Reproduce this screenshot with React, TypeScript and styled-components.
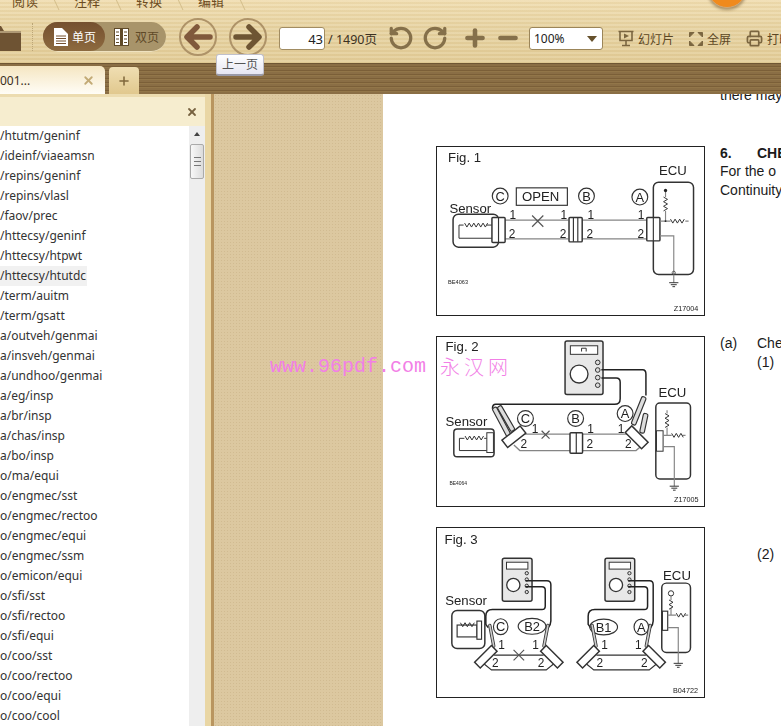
import React from 'react';
import styled, { createGlobalStyle } from 'styled-components';
import { Plus, Printer, RotateCcw, RotateCw, Minus, X } from 'lucide-react';

const GlobalStyle = createGlobalStyle`
  html, body { margin: 0; padding: 0; height: 100%; overflow: hidden; background: #fff; }
  #root { height: 100%; }
  * { box-sizing: border-box; }
`;

const cjk = `"Noto Sans", "Noto Sans CJK SC", sans-serif`;

const Shell = styled.div`
  position: relative;
  width: 781px;
  height: 726px;
  overflow: hidden;
  display: flex;
  flex-direction: column;
  font-family: ${cjk};
`;

const Toolbar = styled.header`
  height: 64px;
  flex: none;
  overflow: hidden;
  background:
    repeating-linear-gradient(to bottom, rgba(255, 255, 255, 0.1) 0 2px, rgba(150, 110, 50, 0.05) 2px 4px),
    linear-gradient(to bottom, #f0ddb0, #e6d2a0 50%, #e3cd98);
  border-bottom: 1px solid #6f5634;
`;

const MenuRow = styled.nav`
  height: 10px;
  display: flex;
  padding-left: 12px;
`;

const MenuItem = styled.span`
  position: relative;
  width: 62px;
  flex: none;
  font-size: 13px;
  line-height: 13px;
  margin-top: -5px;
  color: #6d4d22;
  &::after {
    content: '';
    position: absolute;
    left: 43px;
    top: 0;
    width: 1px;
    height: 15px;
    background: #d3bd8a;
    transform: skewX(25deg);
  }
`;

const ToolRow = styled.div`
  height: 53px;
  display: flex;
  align-items: center;
  padding-top: 1px;
`;

const Folder = styled.svg`
  width: 32px;
  height: 28px;
  margin-left: -11px;
  flex: none;
`;

const DotDivider = styled.i`
  width: 0;
  height: 28px;
  margin: 0 10px 0 11px;
  border-left: 1px dotted #bca677;
`;

const ViewToggle = styled.div`
  width: 123px;
  height: 30px;
  display: flex;
  border-radius: 15px;
  background: #a8946a;
  border-bottom: 1px solid #efe2bf;
`;

const ViewOption = styled.div<{ $active?: boolean }>`
  width: ${p => (p.$active ? 62 : 61)}px;
  height: 29px;
  display: flex;
  align-items: center;
  gap: ${p => (p.$active ? 4 : 6)}px;
  padding-left: ${p => (p.$active ? 11 : 9)}px;
  border-radius: 15px;
  font-size: 12px;
  color: ${p => (p.$active ? '#fff' : '#5f4a28')};
  background: ${p => (p.$active ? 'linear-gradient(#75502f, #8d6a3f)' : 'transparent')};
`;

const NavButton = styled.div<{ $first?: boolean }>`
  width: 38px;
  height: 38px;
  margin-left: ${p => (p.$first ? 13 : 12)}px;
  flex: none;
  display: flex;
  align-items: center;
  justify-content: center;
  border: 2px solid #ae9368;
  border-radius: 50%;
`;

const PageInput = styled.div`
  width: 46px;
  height: 23px;
  margin: 3px 0 0 12px;
  flex: none;
  padding-right: 1px;
  background: #fff;
  border: 1px solid #a18c62;
  border-radius: 3px;
  font-size: 13px;
  line-height: 22px;
  text-align: right;
  color: #222;
`;

const PageCount = styled.span`
  width: 60px;
  flex: none;
  margin: 3px 0 0 3px;
  font-size: 12.5px;
  color: #3c3122;
`;

const IconSlot = styled.div<{ $gap?: number }>`
  margin: 2px 0 0 ${p => p.$gap ?? 0}px;
  flex: none;
  display: flex;
  color: #85704a;
`;

const ZoomSelect = styled.div`
  width: 74px;
  height: 23px;
  margin: 3px 0 0 8px;
  flex: none;
  display: flex;
  align-items: center;
  justify-content: space-between;
  padding: 0 4px;
  background: #fff;
  border: 1px solid #9b8559;
  border-radius: 3px;
  font-size: 12px;
  color: #222;
  &::after {
    content: '';
    margin-right: 1px;
    border-left: 5px solid transparent;
    border-right: 5px solid transparent;
    border-top: 6px solid #66512c;
  }
`;

const ToolLink = styled.div<{ $gap: number }>`
  margin: 3px 0 0 ${p => p.$gap}px;
  flex: none;
  display: flex;
  align-items: center;
  gap: 4px;
  font-size: 12px;
  white-space: nowrap;
  color: #5c4724;
`;

const TabBar = styled.div`
  height: 30px;
  flex: none;
  display: flex;
  align-items: flex-end;
  gap: 4px;
  background: repeating-linear-gradient(to bottom, #8a6e45 0 2px, #7b5f38 2px 3px, #927649 3px 4px);
`;

const DocTab = styled.div`
  width: 105px;
  height: 28px;
  display: flex;
  align-items: center;
  justify-content: space-between;
  padding-right: 10px;
  font-size: 12px;
  color: #3b2f1d;
  background: linear-gradient(to bottom, #f5e6c2, #fffdf6);
  border-radius: 0 5px 0 0;
`;

const AddTab = styled.div`
  width: 30px;
  height: 27px;
  display: flex;
  align-items: center;
  justify-content: center;
  color: #80683c;
  background: linear-gradient(to bottom, #efdeb2, #e1c88e);
  border-radius: 4px 4px 0 0;
`;

const Main = styled.main`
  flex: 1;
  min-height: 0;
  display: flex;
`;

const Sidebar = styled.aside`
  width: 205px;
  flex: none;
  padding-top: 3px;
  display: flex;
  flex-direction: column;
  background: #ecdcb0;
`;

const SideHeader = styled.div`
  height: 29px;
  flex: none;
  display: flex;
  align-items: center;
  justify-content: flex-end;
  padding-right: 7px;
  color: #776240;
  background: #f6edcf;
`;

const SideBody = styled.div`
  flex: 1;
  min-height: 0;
  display: flex;
  overflow: hidden;
  background: #fff;
`;

const Outline = styled.ul`
  flex: 1;
  margin: 0;
  padding: 0;
  list-style: none;
`;

const OutlineRow = styled.li<{ $current?: boolean }>`
  width: ${p => (p.$current ? '87px' : 'auto')};
  height: 20px;
  font-size: 12px;
  line-height: 20px;
  color: #333;
  white-space: nowrap;
  background: ${p => (p.$current ? '#f1f1f1' : 'transparent')};
`;

const ScrollTrack = styled.div`
  width: 16px;
  flex: none;
  display: flex;
  flex-direction: column;
  align-items: center;
  background: #eeeeee;
  padding-top: 6px;
`;

const ScrollUp = styled.i`
  border-left: 3px solid transparent;
  border-right: 3px solid transparent;
  border-bottom: 4px solid #444;
`;

const ScrollThumb = styled.div`
  width: 14px;
  height: 35px;
  margin-top: 8px;
  display: flex;
  align-items: center;
  justify-content: center;
  border: 1px solid #aaa;
  border-radius: 2px;
  background: linear-gradient(to right, #f8f8f8, #dcdcdc);
  &::after {
    content: '';
    width: 7px;
    height: 7px;
    border-top: 1px solid #777;
    border-bottom: 1px solid #777;
    background: linear-gradient(#777, #777) center / 100% 1px no-repeat;
  }
`;

const Splitter = styled.div`
  width: 9px;
  flex: none;
  background: #e9d6a4;
  border-right: 3px solid #b9955f;
`;

const Desk = styled.div`
  width: 169px;
  flex: none;
  background-color: #dcc8a0;
  background-image: radial-gradient(rgba(140, 110, 60, 0.14) 1px, transparent 1px);
  background-size: 3px 3px;
`;

const Page = styled.section`
  flex: 1;
  min-width: 0;
  overflow: hidden;
  display: flex;
  padding-left: 53px;
  background: #fff;
`;

const FigureColumn = styled.div`
  width: 269px;
  flex: none;
  padding-top: 52px;
  display: flex;
  flex-direction: column;
  gap: 20px;
`;

const Figure = styled.figure<{ $h: number }>`
  width: 269px;
  height: ${p => p.$h}px;
  margin: 0;
  flex: none;
  border: 1px solid #222;
  svg { display: block; width: 100%; height: 100%; filter: blur(0.25px); }
`;

const TextColumn = styled.div`
  margin-left: 15px;
  margin-top: -8px;
  flex: 1;
  min-width: 0;
  font-family: "Liberation Sans", Arial, sans-serif;
  font-size: 14px;
  line-height: 19px;
  color: #1b1b1b;
  white-space: nowrap;
`;

const Para = styled.p<{ $top?: number; $indent?: number; $bold?: boolean }>`
  margin: ${p => p.$top ?? 0}px 0 0 ${p => p.$indent ?? 0}px;
  font-weight: ${p => (p.$bold ? 700 : 400)};
  display: flex;
`;

const Marker = styled.span<{ $w: number }>`
  width: ${p => p.$w}px;
  flex: none;
`;

const Tooltip = styled.div`
  position: absolute;
  left: 216px;
  top: 54px;
  width: 48px;
  height: 22px;
  text-align: center;
  font-size: 12px;
  line-height: 20px;
  color: #555;
  background: linear-gradient(#ffffff, #e6e6f2);
  border: 1px solid #c0c0cc;
  border-bottom: 2px solid #9a9aa8;
  border-radius: 3px;
`;

const Badge = styled.div`
  position: absolute;
  left: 707px;
  top: -32px;
  width: 40px;
  height: 40px;
  border-radius: 50%;
  background: #f08a1d;
  border: 1px solid #cfa878;
  box-shadow: 0 2px 3px rgba(90, 60, 20, 0.45);
`;

const Watermark = styled.div`
  position: absolute;
  left: 270px;
  top: 352px;
  display: flex;
  gap: 14px;
  align-items: center;
  color: #f27fe6;
  white-space: nowrap;
`;

const WatermarkUrl = styled.span`
  font-family: "Liberation Mono", monospace;
  font-size: 20px;
`;

const WatermarkName = styled.span`
  font-family: "Noto Sans CJK SC", sans-serif;
  font-size: 20px;
  letter-spacing: 4px;
  font-weight: 300;
`;

const outline = [
  '/htutm/geninf', '/ideinf/viaeamsn', '/repins/geninf', '/repins/vlasl', '/faov/prec',
  '/httecsy/geninf', '/httecsy/htpwt', '/httecsy/htutdc', '/term/auitm', '/term/gsatt',
  'a/outveh/genmai', 'a/insveh/genmai', 'a/undhoo/genmai', 'a/eg/insp', 'a/br/insp',
  'a/chas/insp', 'a/bo/insp', 'o/ma/equi', 'o/engmec/sst', 'o/engmec/rectoo',
  'o/engmec/equi', 'o/engmec/ssm', 'o/emicon/equi', 'o/sfi/sst', 'o/sfi/rectoo',
  'o/sfi/equi', 'o/coo/sst', 'o/coo/rectoo', 'o/coo/equi', 'o/coo/cool',
];

const ink = '#333';
const wire = '#858585';

// figure drawings use a 807x510 box, three times the on-screen size
const Label = ({ x, y, s = 40, children }: { x: number; y: number; s?: number; children: React.ReactNode }) => (
  <text x={x} y={y} fontSize={s} fontFamily="Liberation Sans, Arial, sans-serif" fill="#222">{children}</text>
);

const Ring = ({ x, y, t, rx = 24, ry = 24 }: { x: number; y: number; t: string; rx?: number; ry?: number }) => (
  <g>
    <ellipse cx={x} cy={y} rx={rx} ry={ry} fill="none" stroke={ink} strokeWidth={3.5} />
    <text x={x} y={y + 14} fontSize={39} textAnchor="middle" fontFamily="Liberation Sans, Arial, sans-serif" fill="#222">{t}</text>
  </g>
);

const Zig = ({ x, y, n = 7, vertical }: { x: number; y: number; n?: number; vertical?: boolean }) => {
  const pts = Array.from({ length: n }, (_, i) => {
    const a = i * 7;
    const b = i % 2 ? 6 : -6;
    return vertical ? `${x + b},${y + a}` : `${x + a},${y + b}`;
  }).join(' ');
  return <polyline points={pts} fill="none" stroke={ink} strokeWidth={3} />;
};

const Connector = ({ x, y, w, h, bars = 1 }: { x: number; y: number; w: number; h: number; bars?: number }) => (
  <g>
    <rect x={x} y={y} width={w} height={h} fill="#fff" stroke={ink} strokeWidth={4.5} rx={3} />
    {Array.from({ length: bars }, (_, i) => {
      const bx = x + (w * (i + 1)) / (bars + 1);
      return <line key={i} x1={bx} y1={y} x2={bx} y2={y + h} stroke={ink} strokeWidth={3.5} />;
    })}
  </g>
);

const Cross = ({ x, y, r = 17 }: { x: number; y: number; r?: number }) => (
  <path d={`M${x - r} ${y - r}L${x + r} ${y + r}M${x - r} ${y + r}L${x + r} ${y - r}`} stroke="#555" strokeWidth={3.5} />
);

const Ground = ({ x, y }: { x: number; y: number }) => (
  <path d={`M${x - 14} ${y}H${x + 14}M${x - 9} ${y + 6}H${x + 9}M${x - 4} ${y + 12}H${x + 4}`} stroke={ink} strokeWidth={3} />
);

const Pins = ({ items }: { items: [number, number, string][] }) => (
  <>{items.map(([x, y, t]) => <Label key={`${x}-${y}`} x={x} y={y} s={36}>{t}</Label>)}</>
);

const Probe = ({ x, y, angle, len = 75 }: { x: number; y: number; angle: number; len?: number }) => (
  <g transform={`rotate(${angle} ${x} ${y})`}>
    <rect x={x - 7} y={y} width={14} height={len} rx={5} fill="#ddd" stroke={ink} strokeWidth={3.5} />
  </g>
);

const Meter = ({ x, y, w, h, r, sy, sg, sr }: { x: number; y: number; w: number; h: number; r: number; sy: number; sg: number; sr: number }) => (
  <g>
    <rect x={x} y={y} width={w} height={h} rx={6} fill="#e8e8e8" stroke={ink} strokeWidth={4.5} />
    <rect x={x + w * 0.14} y={y + h * 0.09} width={w * 0.72} height={h * 0.16} fill="#fff" stroke={ink} strokeWidth={3} />
    <circle cx={x + w * 0.37} cy={y + h * 0.62} r={r} fill="#fff" stroke={ink} strokeWidth={4} />
    {[0, 1, 2, 3].map(i => (
      <circle key={i} cx={x + w - 16} cy={sy + i * sg} r={sr} fill="#ddd" stroke={ink} strokeWidth={3} />
    ))}
  </g>
);

const FigureOne = () => (
  <svg viewBox="18 18 807 510">
    <Label x={50} y={63}>Fig. 1</Label>
    <Label x={690} y={102}>ECU</Label>
    <Ring x={208} y={167} t="C" />
    <rect x={257} y={142} width={155} height={53} fill="none" stroke={ink} strokeWidth={3.5} />
    <Label x={274} y={182}>OPEN</Label>
    <Ring x={470} y={167} t="B" />
    <Ring x={632} y={170} t="A" />
    <Label x={54} y={217}>Sensor</Label>
    <rect x={65} y={222} width={138} height={100} rx={16} fill="none" stroke={ink} strokeWidth={4.5} />
    <path d="M183 255H83V295H183" fill="none" stroke={ink} strokeWidth={3} />
    <rect x={97} y={245} width={70} height={20} fill="#fff" />
    <Zig x={100} y={255} n={11} />
    <path d="M223 240H415M223 297H415M457 240H655M457 297H655" stroke={wire} strokeWidth={4} />
    <Connector x={183} y={232} w={40} h={76} />
    <Connector x={417} y={232} w={40} h={74} bars={2} />
    <rect x={673} y={125} width={122} height={280} rx={16} fill="none" stroke={ink} strokeWidth={4.5} />
    <Connector x={653} y={232} w={40} h={71} />
    <Cross x={322} y={243} />
    <Pins items={[[236, 236, '1'], [234, 294, '2'], [391, 236, '1'], [389, 294, '2'], [473, 236, '1'], [470, 294, '2'], [626, 236, '1'], [625, 294, '2']]} />
    <path d="M710 150V170M710 212V243M693 243H725M770 243H780M693 288H735V430" fill="none" stroke={wire} strokeWidth={3.5} />
    <circle cx={710} cy={150} r={5} fill="#222" />
    <circle cx={710} cy={243} r={3} fill="#222" />
    <circle cx={735} cy={400} r={5} fill="none" stroke={ink} strokeWidth={2} />
    <Zig x={710} y={170} n={7} vertical />
    <Zig x={725} y={243} n={7} />
    <Ground x={735} y={430} />
    <Label x={50} y={435} s={17}>BE4063</Label>
    <Label x={735} y={515} s={22}>Z17004</Label>
  </svg>
);

const FigureTwo = () => (
  <svg viewBox="18 18 807 512">
    <Label x={43} y={61}>Fig. 2</Label>
    <Meter x={405} y={30} w={115} h={162} r={27} sy={95} sg={23} sr={7} />
    <path d="M455 62V52H469V62" fill="none" stroke={ink} strokeWidth={3} />
    <path d="M515 117H640Q650 117 650 130V195M515 142H560Q572 142 572 155V205Q572 222 555 222H195Q185 222 185 235" fill="none" stroke="#222" strokeWidth={4.5} />
    <Label x={43} y={288}>Sensor</Label>
    <rect x={68} y={297} width={122} height={84} rx={10} fill="none" stroke={ink} strokeWidth={4.5} />
    <path d="M168 325H85V362H168" fill="none" stroke={ink} strokeWidth={3} />
    <rect x={100} y={313} width={60} height={22} fill="#fff" />
    <Zig x={102} y={324} n={9} />
    <rect x={168} y={308} width={20} height={60} fill="#fff" stroke={ink} strokeWidth={3} />
    <Ring x={285} y={265} t="C" />
    <Ring x={437} y={265} t="B" />
    <Ring x={587} y={250} t="A" />
    <path d="M270 312H420M250 345L268 362H420M458 312H600M458 362H620L640 345" fill="none" stroke={wire} strokeWidth={4} />
    <Connector x={420} y={308} w={38} h={62} bars={1} />
    <Cross x={346} y={314} r={12} />
    <Pins items={[[304, 310, '1'], [270, 355, '2'], [472, 310, '1'], [470, 355, '2'], [565, 310, '1'], [587, 355, '2']]} />
    <Probe x={190} y={232} angle={-28} len={100} />
    <Probe x={205} y={228} angle={-30} len={85} />
    <g transform="rotate(52 250 320)"><rect x={236} y={285} width={28} height={70} fill="#fff" stroke={ink} strokeWidth={4.5} /></g>
    <Probe x={645} y={200} angle={22} len={90} />
    <Probe x={650} y={250} angle={12} len={60} />
    <g transform="rotate(-45 622 322)"><rect x={608} y={287} width={28} height={70} fill="#fff" stroke={ink} strokeWidth={4.5} /></g>
    <Label x={688} y={201}>ECU</Label>
    <rect x={680} y={218} width={105} height={230} rx={12} fill="none" stroke={ink} strokeWidth={4.5} />
    <rect x={682} y={302} width={20} height={62} fill="#fff" stroke={ink} strokeWidth={3} />
    <path d="M714 240V250M714 292V316M702 316H728M760 316H770M702 350H736V470" fill="none" stroke={wire} strokeWidth={3.5} />
    <Zig x={714} y={250} n={7} vertical />
    <Zig x={728} y={316} n={6} />
    <Ground x={736} y={470} />
    <Label x={55} y={466} s={15}>BE4064</Label>
    <Label x={735} y={517} s={22}>Z17005</Label>
  </svg>
);

// clip bar on the wire end plus the probe pen running up to the meter lead
const Tweezers = ({ x, y, flip }: { x: number; y: number; flip?: boolean }) => (
  <g transform={`translate(${x} ${y}) scale(${flip ? -1 : 1} 1)`}>
    <path d="M12 -95L24 -32" stroke={ink} strokeWidth={10} strokeLinecap="round" />
    <path d="M12 -95L24 -32" stroke="#ccc" strokeWidth={5} strokeLinecap="round" />
    <g transform="rotate(45)">
      <rect x={-12} y={-36} width={24} height={72} fill="#fff" stroke={ink} strokeWidth={4.5} />
    </g>
  </g>
);

const FigureThree = () => (
  <svg viewBox="18 18 807 512">
    <Label x={40} y={66}>Fig. 3</Label>
    <Label x={42} y={251}>Sensor</Label>
    <rect x={62} y={268} width={100} height={115} rx={16} fill="none" stroke={ink} strokeWidth={4.5} />
    <rect x={78} y={312} width={60} height={36} fill="#fff" stroke={ink} strokeWidth={3.5} />
    <rect x={138} y={300} width={14} height={55} fill="#fff" stroke={ink} strokeWidth={3.5} />
    <Zig x={88} y={311} n={7} />
    <Meter x={215} y={110} w={90} h={130} r={20} sy={155} sg={19} sr={5} />
    <Meter x={526} y={110} w={90} h={130} r={20} sy={155} sg={19} sr={5} />
    <path d="M285 178H350Q362 178 362 190V300Q362 310 354 320M285 196H335Q345 196 345 206V255Q345 265 335 265H185Q165 265 165 285V310L172 320" fill="none" stroke="#222" strokeWidth={4.5} />
    <path d="M596 178H661Q672 178 672 190V300Q672 310 664 320M596 196H645Q655 196 655 206V255Q655 265 645 265H495Q475 265 475 285V310L482 320" fill="none" stroke="#222" strokeWidth={4.5} />
    <Ring x={210} y={317} t="C" rx={22} ry={24} />
    <Ring x={305} y={316} t="B2" rx={42} ry={24} />
    <Ring x={522} y={318} t="B1" rx={42} ry={24} />
    <Ring x={636} y={318} t="A" rx={22} ry={24} />
    <path d="M190 403H340M160 430L182 448H348L370 430" fill="none" stroke={ink} strokeWidth={3.5} />
    <path d="M500 403H650M470 430L492 448H660L682 430" fill="none" stroke={ink} strokeWidth={3.5} />
    <Tweezers x={165} y={408} />
    <Tweezers x={365} y={408} flip />
    <Tweezers x={475} y={408} />
    <Tweezers x={675} y={408} flip />
    <Cross x={265} y={403} r={16} />
    <Pins items={[[203, 386, '1'], [184, 440, '2'], [306, 386, '1'], [322, 440, '2'], [515, 386, '1'], [500, 440, '2'], [617, 386, '1'], [635, 440, '2']]} />
    <Label x={702} y={176}>ECU</Label>
    <rect x={698} y={185} width={87} height={210} rx={14} fill="none" stroke={ink} strokeWidth={4.5} />
    <rect x={700} y={270} width={16} height={58} fill="#fff" stroke={ink} strokeWidth={3.5} />
    <circle cx={726} cy={216} r={8} fill="none" stroke={ink} strokeWidth={3} />
    <path d="M726 224V236M726 260V282M716 282H742M768 282H778M716 320H748V428" fill="none" stroke={wire} strokeWidth={3.5} />
    <Zig x={726} y={236} n={5} vertical />
    <Zig x={742} y={282} n={5} />
    <Ground x={748} y={428} />
    <Label x={732} y={518} s={22}>B04722</Label>
  </svg>
);

const SingleIcon = () => (
  <svg width="14" height="18" viewBox="0 0 14 18">
    <path d="M0 0H8L14 6V18H0Z" fill="#fff" />
    <path d="M2 8H12M2 10.5H12M2 13H12M2 15.5H12" stroke="#75502f" />
  </svg>
);

const DoubleIcon = () => (
  <svg width="15" height="18" viewBox="0 0 15 18">
    <rect x="0.5" y="0.5" width="14" height="17" fill="#fff" stroke="#5f4a28" />
    <path d="M7.5 0V18" stroke="#5f4a28" strokeWidth="3" />
    <path d="M2 4H5M2 7.5H5M2 11H5M2 14.5H5M10 4H13M10 7.5H13M10 11H13M10 14.5H13" stroke="#5f4a28" />
  </svg>
);

const ArrowIcon = ({ dir, colour }: { dir: 'left' | 'right'; colour: string }) => (
  <svg width="30" height="26" viewBox="0 0 30 26" style={{ transform: dir === 'left' ? 'none' : 'scaleX(-1)' }}>
    <path d="M14 3L4 13L14 23M5 13H27" fill="none" stroke={colour} strokeWidth="5.5" strokeLinecap="round" strokeLinejoin="round" />
  </svg>
);

const SlideIcon = () => (
  <svg width="16" height="17" viewBox="0 0 16 17">
    <path d="M0.5 1.5H15.5M2 1.5V10.5H14V1.5M8 10.5V15M4 15.5H12" fill="none" stroke="#7b6640" strokeWidth="1.6" />
    <path d="M6 3.5L11 6L6 8.5Z" fill="#7b6640" />
  </svg>
);

const FullIcon = () => (
  <svg width="14" height="14" viewBox="0 0 14 14">
    <path d="M0.5 5V0.5H5L0.5 5M13.5 5V0.5H9L13.5 5M0.5 9V13.5H5L0.5 9M13.5 9V13.5H9L13.5 9" fill="#7b6640" stroke="#7b6640" />
  </svg>
);

export default function App() {
  return (
    <Shell>
      <GlobalStyle />
      <Toolbar>
        <MenuRow>
          <MenuItem>阅读</MenuItem>
          <MenuItem>注释</MenuItem>
          <MenuItem>转换</MenuItem>
          <MenuItem>编辑</MenuItem>
        </MenuRow>
        <ToolRow>
          <Folder viewBox="0 0 32 28">
            <path d="M0 3H12L15 8H32V28H0Z" fill="#6e5333" />
            <path d="M0 9H32" stroke="#efe0b8" />
          </Folder>
          <DotDivider />
          <ViewToggle>
            <ViewOption $active><SingleIcon />单页</ViewOption>
            <ViewOption><DoubleIcon />双页</ViewOption>
          </ViewToggle>
          <NavButton $first><ArrowIcon dir="left" colour="#80593c" /></NavButton>
          <NavButton><ArrowIcon dir="right" colour="#6e5533" /></NavButton>
          <PageInput>43</PageInput>
          <PageCount>/ 1490页</PageCount>
          <IconSlot><RotateCcw size={26} strokeWidth={3} /></IconSlot>
          <IconSlot $gap={8}><RotateCw size={26} strokeWidth={3} /></IconSlot>
          <IconSlot $gap={14}><Plus size={26} strokeWidth={4.2} /></IconSlot>
          <IconSlot $gap={7}><Minus size={26} strokeWidth={4.2} /></IconSlot>
          <ZoomSelect>100%</ZoomSelect>
          <ToolLink $gap={15}><SlideIcon />幻灯片</ToolLink>
          <ToolLink $gap={15}><FullIcon />全屏</ToolLink>
          <ToolLink $gap={15}><Printer size={17} color="#7b6640" strokeWidth={2.4} />打印</ToolLink>
        </ToolRow>
      </Toolbar>
      <TabBar>
        <DocTab>
          <span>001...</span>
          <X size={13} color="#c2aa75" strokeWidth={3.4} />
        </DocTab>
        <AddTab><Plus size={14} strokeWidth={2.6} /></AddTab>
      </TabBar>
      <Main>
        <Sidebar>
          <SideHeader><X size={12} strokeWidth={3.6} /></SideHeader>
          <SideBody>
            <Outline>
              {outline.map(path => (
                <OutlineRow key={path} $current={path === '/httecsy/htutdc'}>{path}</OutlineRow>
              ))}
            </Outline>
            <ScrollTrack>
              <ScrollUp />
              <ScrollThumb />
            </ScrollTrack>
          </SideBody>
        </Sidebar>
        <Splitter />
        <Desk />
        <Page>
          <FigureColumn>
            <Figure $h={170}><FigureOne /></Figure>
            <Figure $h={171}><FigureTwo /></Figure>
            <Figure $h={171}><FigureThree /></Figure>
          </FigureColumn>
          <TextColumn>
            <Para>there may</Para>
            <Para $top={39} $bold><Marker $w={37}>6.</Marker>CHECK</Para>
            <Para $top={-1}>For the o</Para>
            <Para>Continuity</Para>
            <Para $top={134}><Marker $w={37}>(a)</Marker>Che</Para>
            <Para $indent={37}>(1)</Para>
            <Para $top={173} $indent={37}>(2)</Para>
          </TextColumn>
        </Page>
      </Main>
      <Tooltip>上一页</Tooltip>
      <Badge />
      <Watermark>
        <WatermarkUrl>www.96pdf.com</WatermarkUrl>
        <WatermarkName>永汉网</WatermarkName>
      </Watermark>
    </Shell>
  );
}
